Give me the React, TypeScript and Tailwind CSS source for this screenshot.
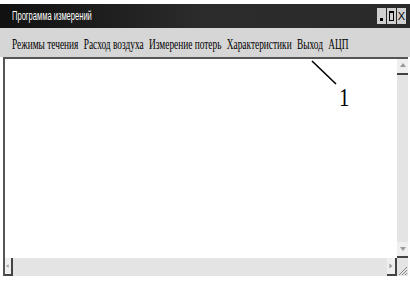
import React from "react";

const MENU = ["Режимы течения", "Расход воздуха", "Измерение потерь", "Характеристики", "Выход", "АЦП"];

function Arrow({ dir }: { dir: "up" | "down" | "left" | "right" }) {
  const pts = {
    up: "2,6 5,2 8,6",
    down: "2,3 5,7 8,3",
    left: "6,2 2,5 6,8",
    right: "3,2 7,5 3,8",
  }[dir];
  return (
    <svg width="10" height="10" viewBox="0 0 10 10">
      <polygon points={pts} fill="#9a9a9a" />
    </svg>
  );
}

export default function App() {
  return (
    <div className="w-[410px] h-[281px] bg-white overflow-hidden flex flex-col pt-[4px]">
      {/* title bar */}
      <div className="h-[24px] bg-gradient-to-r from-[#111] via-[#2c2c2c] to-[#2a2a2a] flex items-center justify-between pl-[12px] pr-[4px]">
        <span className="text-white text-[12px] whitespace-nowrap origin-left scale-x-[0.63]" style={{ fontFamily: '"Liberation Sans", sans-serif' }}>
          Программа измерений
        </span>
        <div className="flex gap-[1px]">
          <div className="w-[9px] h-[16px] bg-[#d0d0d0] flex items-end justify-center pb-[3px]">
            <div className="w-[3px] h-[3px] bg-black" />
          </div>
          <div className="w-[9px] h-[16px] bg-[#d0d0d0] flex items-center justify-center">
            <div className="w-[5px] h-[10px] border border-black border-t-2" />
          </div>
          <div className="w-[9px] h-[16px] bg-[#d0d0d0] flex items-center justify-center text-[11px] leading-none text-black" style={{ fontFamily: '"Liberation Sans Narrow", "Liberation Sans", sans-serif' }}>
            X
          </div>
        </div>
      </div>

      {/* menu bar */}
      <div className="h-[29px] bg-[#d6d6d6] flex items-center pl-[12px] pt-[4px]">
        <div className="flex gap-[8px] whitespace-nowrap origin-left scale-x-[0.668]">
          {MENU.map((m) => (
            <span key={m} className="text-[14px] text-black" style={{ fontFamily: '"Liberation Serif", serif' }}>
              {m}
            </span>
          ))}
        </div>
      </div>

      {/* client area */}
      <div className="relative ml-[3px] mr-[2px] h-[219px] border-t-2 border-l-2 border-[#555] flex flex-col">
        <div className="flex-1 flex">
          <div className="flex-1 bg-white" />
          <div className="w-[11px] bg-[#e4e4e4] flex flex-col justify-between">
            <div className="h-[16px] bg-[#efefef] border-b-2 border-[#444] flex items-center justify-center">
              <Arrow dir="up" />
            </div>
            <div className="h-[16px] bg-[#efefef] border-b-2 border-[#444] flex items-center justify-center">
              <Arrow dir="down" />
            </div>
          </div>
        </div>
        <div className="h-[18px] flex bg-[#e4e4e4]">
          <div className="w-[8px] bg-[#efefef] border-r-2 border-b-2 border-[#444] flex items-center justify-center">
            <Arrow dir="left" />
          </div>
          <div className="flex-1" />
          <div className="w-[10px] bg-[#efefef] border-r-2 border-b-2 border-[#444] flex items-center justify-center">
            <Arrow dir="right" />
          </div>
          <div className="w-[11px] bg-[#e4e4e4] flex items-end justify-end">
            <svg width="11" height="12" viewBox="0 0 11 12">
              <path d="M2 11 L10 3 M5 11 L10 6 M8 11 L10 9" stroke="#888" strokeWidth="1" />
            </svg>
          </div>
        </div>

        {/* callout */}
        <svg className="absolute left-[305px] top-[0px]" width="40" height="30" viewBox="0 0 40 30">
          <line x1="2" y1="2" x2="26" y2="25" stroke="#000" strokeWidth="1.6" />
        </svg>
        <span className="absolute left-[334px] top-[26px] text-[26px] leading-none text-black origin-left scale-x-[0.8]" style={{ fontFamily: '"Liberation Serif", serif' }}>
          1
        </span>
      </div>
    </div>
  );
}
